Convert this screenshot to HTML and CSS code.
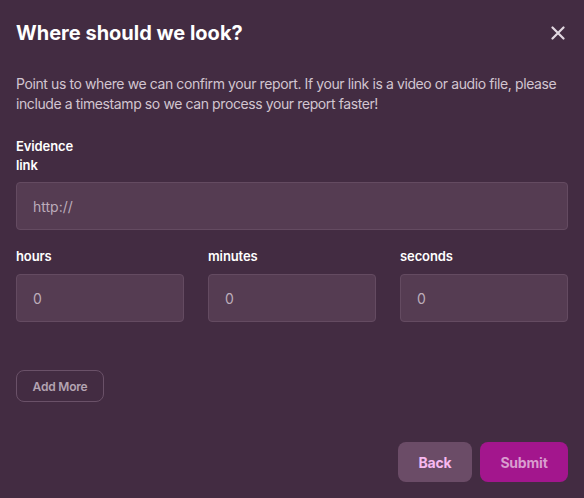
FILE: index.html
```html
<!DOCTYPE html>
<html>
<head>
<meta charset="utf-8">
<link rel="stylesheet" href="styles.css">
</head>
<body>
<div class="modal">
  <div class="header">
    <h1 class="title">Where should we look?</h1>
    <button class="close" aria-label="Close">
      <svg width="14" height="14" viewBox="0 0 14 14"><path d="M1.5 1.5L12.5 12.5M12.5 1.5L1.5 12.5" stroke="#e2d8e1" stroke-width="2.2" stroke-linecap="round"/></svg>
    </button>
  </div>
  <p class="desc">Point us to where we can confirm your report. If your link is a video or audio file, please include a timestamp so we can process your report faster!</p>
  <label class="label narrow">Evidence link</label>
  <div class="input wide">http://</div>
  <div class="times">
    <div class="field">
      <label class="label">hours</label>
      <div class="input">0</div>
    </div>
    <div class="field">
      <label class="label">minutes</label>
      <div class="input">0</div>
    </div>
    <div class="field">
      <label class="label">seconds</label>
      <div class="input">0</div>
    </div>
  </div>
  <button class="addmore">Add More</button>
  <div class="footer">
    <button class="btn back">Back</button>
    <button class="btn submit">Submit</button>
  </div>
</div>
</body>
</html>
```
FILE: styles.css
```css
html, body {
  margin: 0;
  padding: 0;
  background: #432c42;
}
body {
  font-family: Inter, "Noto Sans", sans-serif;
  color: #ffffff;
  width: 584px;
  height: 498px;
  overflow: hidden;
}
.modal {
  padding: 0 16px;
  display: flex;
  flex-direction: column;
}
.header {
  display: flex;
  align-items: center;
  justify-content: space-between;
  height: 66px;
}
.title {
  margin: 0;
  font-size: 20px;
  font-weight: 700;
  letter-spacing: 0;
  color: #ffffff;
}
.close {
  background: none;
  border: 0;
  padding: 0;
  margin-right: 2px;
  width: 16px;
  height: 16px;
  display: flex;
  align-items: center;
  justify-content: center;
}
.desc {
  margin: 8px 0 0;
  font-size: 14px;
  line-height: 20px;
  color: #d2c5d0;
  letter-spacing: -0.4px;
}
.label {
  display: block;
  font-size: 13px;
  font-weight: 600;
  line-height: 19px;
  color: #ffffff;
  letter-spacing: -0.1px;
}
.narrow {
  margin-top: 23px;
  width: 64px;
}
.input {
  box-sizing: border-box;
  height: 48px;
  background: #553c52;
  border: 1px solid #644b61;
  border-radius: 4px;
  padding: 0 16px;
  display: flex;
  align-items: center;
  font-size: 14px;
  color: #bcacba;
}
.wide {
  margin-top: 7px;
}
.times {
  margin-top: 17px;
  display: grid;
  grid-template-columns: 1fr 1fr 1fr;
  column-gap: 24px;
}
.field .label {
  margin-bottom: 8px;
}
.addmore {
  margin-top: 48px;
  align-self: flex-start;
  box-sizing: border-box;
  height: 32px;
  width: 88px;
  background: transparent;
  border: 1px solid #6a5168;
  border-radius: 8px;
  font-family: inherit;
  font-size: 12px;
  font-weight: 600;
  color: #b4a4b2;
  letter-spacing: -0.2px;
}
.footer {
  margin-top: 40px;
  display: flex;
  justify-content: flex-end;
  gap: 8px;
}
.btn {
  height: 40px;
  border: 0;
  border-radius: 8px;
  font-family: inherit;
  font-size: 14px;
  font-weight: 700;
  letter-spacing: -0.2px;
}
.back {
  width: 74px;
  background: #6b4c67;
  color: #f7b8f0;
}
.submit {
  width: 88px;
  background: #a3168d;
  color: #d99ccf;
}
```
